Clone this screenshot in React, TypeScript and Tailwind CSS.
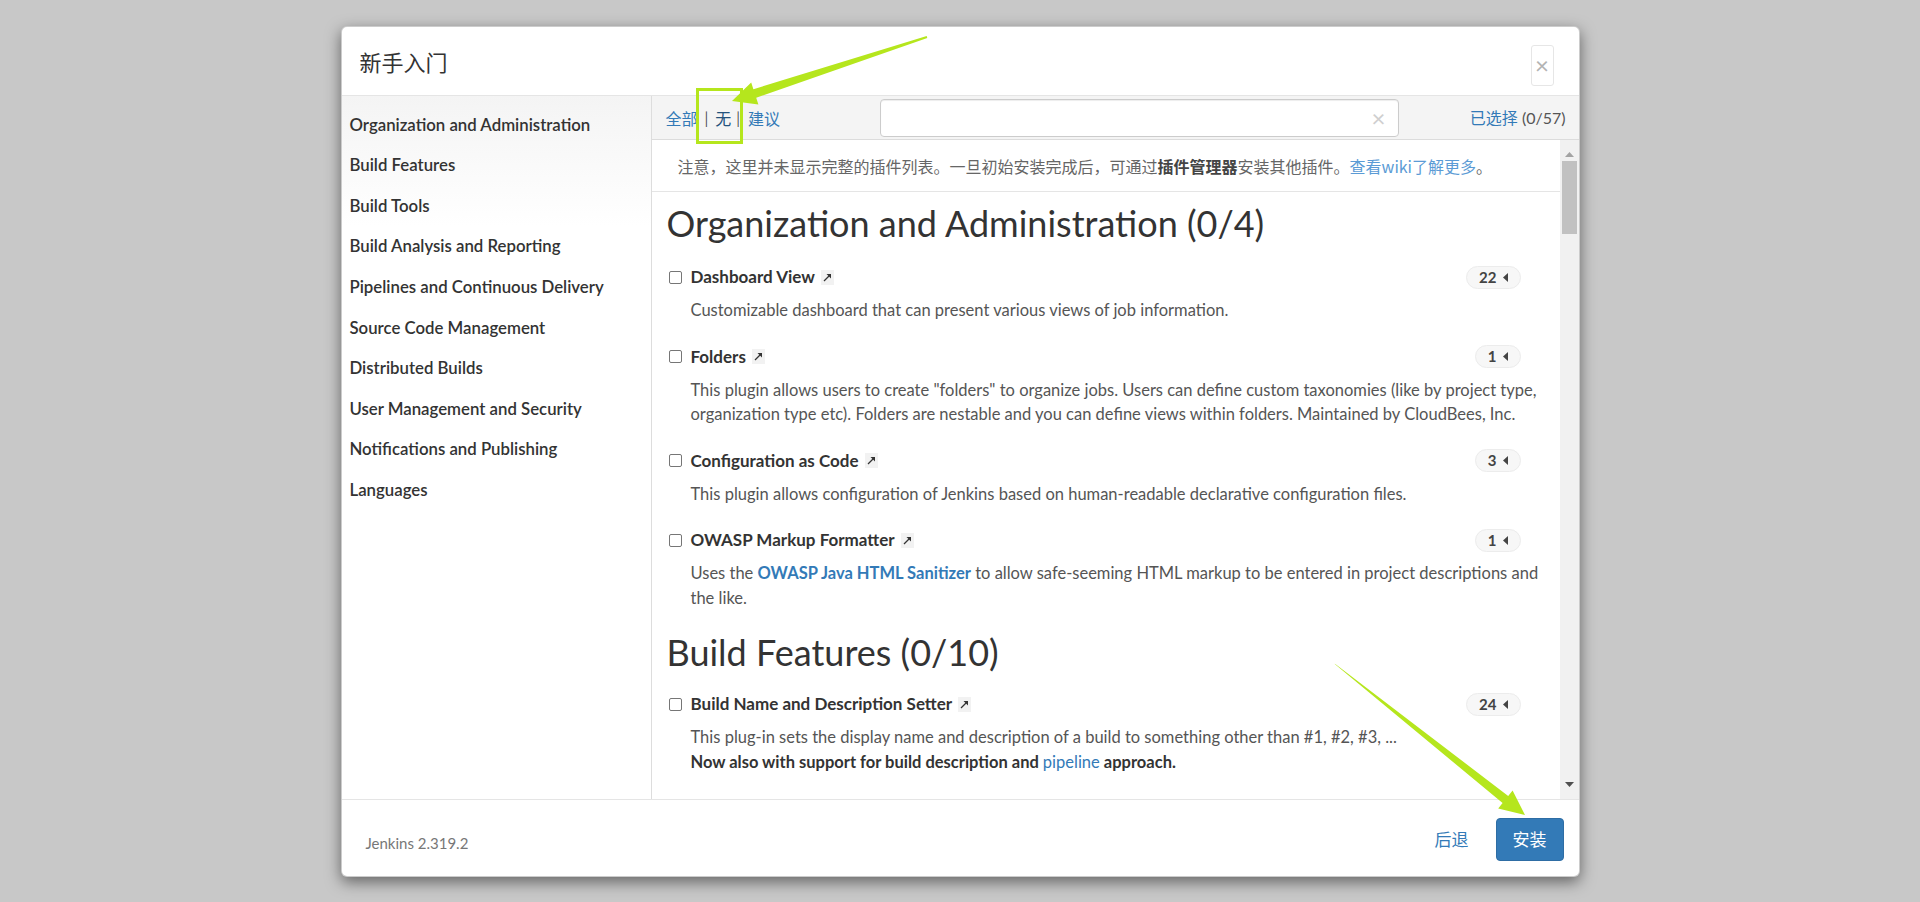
import React from "react";

const FONT = "font-['Lato','Noto_Sans_CJK_SC',sans-serif]";
const CJK = "font-['Noto_Sans_CJK_SC','Lato',sans-serif]";

const categories = [
  "Organization and Administration",
  "Build Features",
  "Build Tools",
  "Build Analysis and Reporting",
  "Pipelines and Continuous Delivery",
  "Source Code Management",
  "Distributed Builds",
  "User Management and Security",
  "Notifications and Publishing",
  "Languages",
];

function ExtIcon() {
  return (
    <span className="ml-[6px] inline-flex h-[15px] w-[13px] items-center justify-center bg-[#f2f2f2]">
      <svg width="11" height="11" viewBox="0 0 11 11">
        <line x1="2" y1="9" x2="8" y2="3" stroke="#333" strokeWidth="1.3" />
        <polygon points="4.5,2 9,2 9,6.5" fill="#333" />
      </svg>
    </span>
  );
}

function Badge({ n }: { n: string }) {
  return (
    <span className="ml-auto flex h-[23px] items-center gap-[6px] rounded-full border border-[#ececec] bg-[#f7f7f7] px-[12px] text-[15px] font-bold text-[#444]">
      {n}
      <svg width="5" height="9" viewBox="0 0 5 9">
        <polygon points="5,0 0,4.5 5,9" fill="#444" />
      </svg>
    </span>
  );
}

function Plugin({
  name,
  badge,
  children,
}: {
  name: string;
  badge: string;
  children: React.ReactNode;
}) {
  return (
    <div className="mb-[22px] pl-[2px]">
      <div className="flex h-[24px] items-center">
        <span className="h-[13px] w-[13px] rounded-[2px] border border-[#767676] bg-white" />
        <span className="ml-[9px] text-[17px] font-bold text-[#333]">{name}</span>
        <ExtIcon />
        <Badge n={badge} />
      </div>
      <div className="mt-[9px] pl-[22px] text-[16.5px] leading-[24.5px] text-[#555]">{children}</div>
    </div>
  );
}

function Line({ children }: { children: React.ReactNode }) {
  return <div className="whitespace-nowrap">{children}</div>;
}

export default function App() {
  return (
    <div className={`relative h-[902px] w-[1920px] overflow-hidden bg-[#c8c8c8] ${FONT}`}>
      <div className="mx-auto mt-[26px] flex h-[851px] w-[1239px] flex-col overflow-hidden rounded-[6px] border border-[rgba(0,0,0,0.2)] bg-white shadow-[0_5px_15px_rgba(0,0,0,0.5)]">
        {/* header */}
        <div className="flex h-[69px] shrink-0 items-center border-b border-[#e5e5e5] pl-[18px] pr-[25px]">
          <div className={`text-[22px] text-[#333] ${CJK}`}>新手入门</div>
          <div className="ml-auto mt-[8px] flex h-[41px] w-[23px] items-center justify-center rounded-[3px] border border-[#e6e6e6] text-[24px] leading-none text-[#b3b3b3]">
            ×
          </div>
        </div>

        {/* body */}
        <div className="flex h-[703px] shrink-0">
          {/* sidebar */}
          <div className="w-[310px] shrink-0 border-r border-[#dddddd] bg-[linear-gradient(to_bottom,#f4f4f4,#ffffff_130px)] pt-[8px]">
            {categories.map((c) => (
              <div key={c} className="flex h-[40.6px] items-center pl-[8px] text-[16.8px] font-semibold text-[#333]">
                {c}
              </div>
            ))}
          </div>

          {/* main */}
          <div className="flex min-w-0 flex-1 flex-col">
            {/* toolbar */}
            <div className="flex h-[44px] shrink-0 items-center border-b border-[#dcdcdc] bg-[#f4f4f4] pl-[14px] pr-[13px]">
              <div className={`flex w-[214px] items-center text-[16px] ${CJK}`}>
                <span className="text-[#337ab7]">全部</span>
                <span className="mx-[7px] text-[14px] text-[#444]">|</span>
                <span className="text-[#23527c]">无</span>
                <span className="ml-[5px] mr-[8px] text-[14px] text-[#444]">|</span>
                <span className="text-[#337ab7]">建议</span>
              </div>
              <div className="flex h-[38px] w-[519px] items-center justify-end rounded-[4px] border border-[#cccccc] bg-white pr-[12px] shadow-[inset_0_1px_1px_rgba(0,0,0,0.075)]">
                <span className="text-[24px] leading-none text-[#cfcfcf]">×</span>
              </div>
              <div className="ml-auto text-[16px]">
                <span className={`text-[#337ab7] ${CJK}`}>已选择</span>
                <span className="text-[#555]"> (0/57)</span>
              </div>
            </div>

            {/* scroll area */}
            <div className="flex h-[659px] shrink-0">
              <div className="min-w-0 flex-1 overflow-hidden">
                <div className={`flex h-[52px] items-center border-b border-[#e5e5e5] pl-[26px] text-[16px] text-[#666] ${CJK}`}>
                  注意，这里并未显示完整的插件列表。一旦初始安装完成后，可通过
                  <b className="font-bold text-[#444]">插件管理器</b>
                  安装其他插件。
                  <span className="text-[#5b9bd5]">查看wiki了解更多</span>。
                </div>
                <div className="pl-[15px] pr-[39px] pt-[11px]">
                  <h1 className="mb-[22px] text-[36px] leading-[40px] text-[#333]">Organization and Administration (0/4)</h1>
                  <Plugin name="Dashboard View" badge="22">
                    <Line>Customizable dashboard that can present various views of job information.</Line>
                  </Plugin>
                  <Plugin name="Folders" badge="1">
                    <Line>
                      This plugin allows users to create "folders" to organize jobs. Users can define custom taxonomies (like by project type,
                    </Line>
                    <Line>
                      organization type etc). Folders are nestable and you can define views within folders. Maintained by CloudBees, Inc.
                    </Line>
                  </Plugin>
                  <Plugin name="Configuration as Code" badge="3">
                    <Line>This plugin allows configuration of Jenkins based on human-readable declarative configuration files.</Line>
                  </Plugin>
                  <Plugin name="OWASP Markup Formatter" badge="1">
                    <Line>
                      Uses the <span className="font-bold text-[#337ab7]">OWASP Java HTML Sanitizer</span> to allow safe-seeming HTML markup to be entered in project descriptions and
                    </Line>
                    <Line>the like.</Line>
                  </Plugin>
                  <h1 className="mb-[20px] mt-[4px] text-[36px] leading-[40px] text-[#333]">Build Features (0/10)</h1>
                  <Plugin name="Build Name and Description Setter" badge="24">
                    <Line>This plug-in sets the display name and description of a build to something other than #1, #2, #3, ...</Line>
                    <Line>
                      <span className="font-bold text-[#333]">Now also with support for build description and </span>
                      <span className="text-[#337ab7]">pipeline</span>
                      <span className="font-bold text-[#333]"> approach.</span>
                    </Line>
                  </Plugin>
                </div>
              </div>
              {/* scrollbar */}
              <div className="flex w-[19px] shrink-0 flex-col bg-[#f1f1f1]">
                <div className="flex h-[17px] items-end justify-center">
                  <svg width="9" height="5" viewBox="0 0 9 5">
                    <polygon points="0,5 4.5,0 9,5" fill="#a3a3a3" />
                  </svg>
                </div>
                <div className="mx-[2px] mt-[4px] h-[73px] bg-[#c1c1c1]" />
                <div className="flex-1" />
                <div className="flex h-[17px] items-start justify-center">
                  <svg width="9" height="5" viewBox="0 0 9 5">
                    <polygon points="0,0 9,0 4.5,5" fill="#505050" />
                  </svg>
                </div>
              </div>
            </div>
          </div>
        </div>

        {/* footer */}
        <div className="flex h-[79px] shrink-0 items-center border-t border-[#e5e5e5] pl-[24px] pr-[15px]">
          <div className="mt-[8px] text-[15px] text-[#777]">Jenkins 2.319.2</div>
          <div className={`ml-auto mr-[27px] text-[17px] text-[#337ab7] ${CJK}`}>后退</div>
          <div className={`flex h-[43px] w-[68px] items-center justify-center rounded-[4px] border border-[#2e6da4] bg-[#337ab7] text-[17px] text-white ${CJK}`}>
            安装
          </div>
        </div>
      </div>

      {/* annotations */}
      <svg className="pointer-events-none absolute left-0 top-0" width="1920" height="902" viewBox="0 0 1920 902">
        <rect x="697.5" y="89.5" width="44" height="53" fill="none" stroke="#b5e61d" strokeWidth="3" />
        <polygon
          points="927.3,38 756.2,97.8 758.4,104.4 732,101 751.2,82.6 753.4,89.2 926.7,36"
          fill="#b5e61d"
        />
        <polygon
          points="1335.6,664.2 1508.2,796 1512.6,790.5 1525,815 1498.2,808.5 1502.6,803 1334.4,663.8"
          fill="#b5e61d"
        />
      </svg>
    </div>
  );
}
